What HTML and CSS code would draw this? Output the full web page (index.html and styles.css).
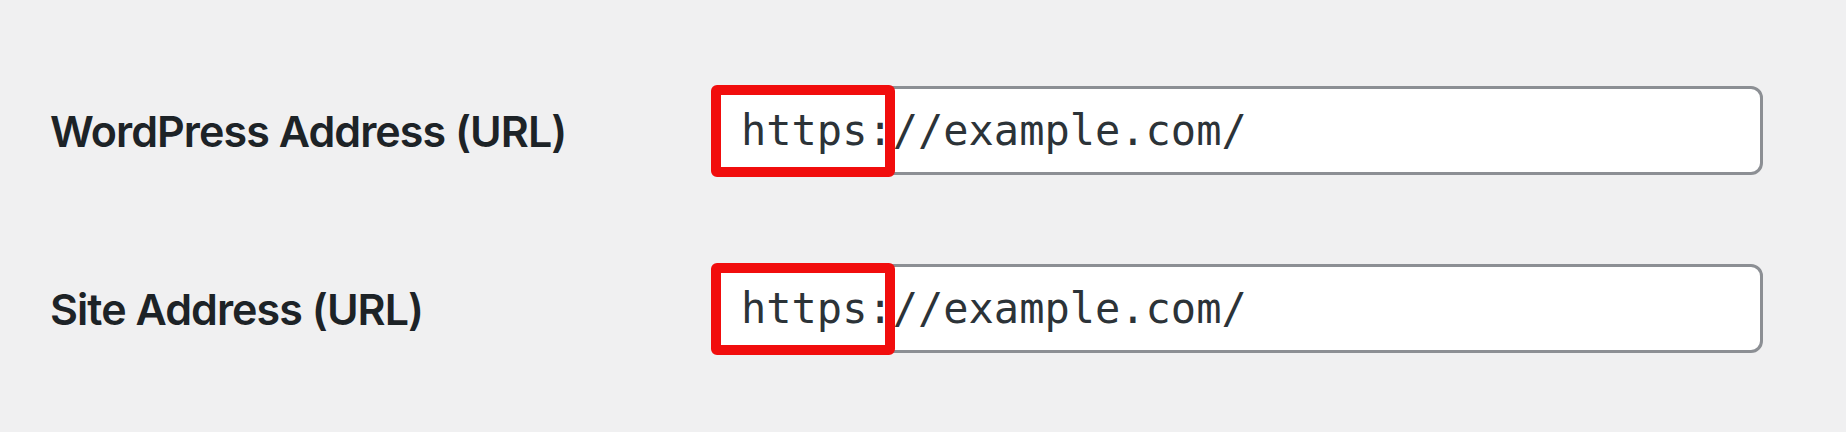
FILE: index.html
```html
<!DOCTYPE html>
<html lang="en">
<head>
<meta charset="utf-8">
<title>General Settings</title>
<link rel="stylesheet" href="styles.css">
</head>
<body>
<div class="form-table">
  <label class="label" for="siteurl">WordPress Address (URL)</label>
  <div class="field">
    <input class="url-input" id="siteurl" type="text" value="https://example.com/">
    <span class="highlight"></span>
  </div>
  <label class="label" for="home">Site Address (URL)</label>
  <div class="field">
    <input class="url-input" id="home" type="text" value="https://example.com/">
    <span class="highlight"></span>
  </div>
</div>
</body>
</html>
```
FILE: styles.css
```css
html, body {
  margin: 0;
  padding: 0;
  background: #f0f0f1;
  height: 100%;
}
.form-table {
  display: grid;
  grid-template-columns: 663px 1050px;
  row-gap: 89px;
  padding: 86px 0 0 50px;
  align-items: center;
}
.label {
  font-family: Inter, "Liberation Sans", sans-serif;
  font-weight: 600;
  font-size: 43px;
  letter-spacing: -0.95px;
  color: #1d2327;
}
.field {
  position: relative;
  height: 89px;
}
.url-input {
  box-sizing: border-box;
  display: block;
  width: 100%;
  height: 89px;
  margin: 0;
  border: 3px solid #8c8f94;
  border-radius: 12px;
  background: #fff;
  padding: 0 0 0 25px;
  font-family: "DejaVu Sans Mono", "Liberation Mono", monospace;
  font-size: 42px;
  color: #2c3338;
  outline: none;
}
.highlight {
  position: absolute;
  left: -2px;
  top: -1px;
  width: 164px;
  height: 72px;
  border: 10px solid #f10d0d;
  border-radius: 6px;
  pointer-events: none;
}
```
